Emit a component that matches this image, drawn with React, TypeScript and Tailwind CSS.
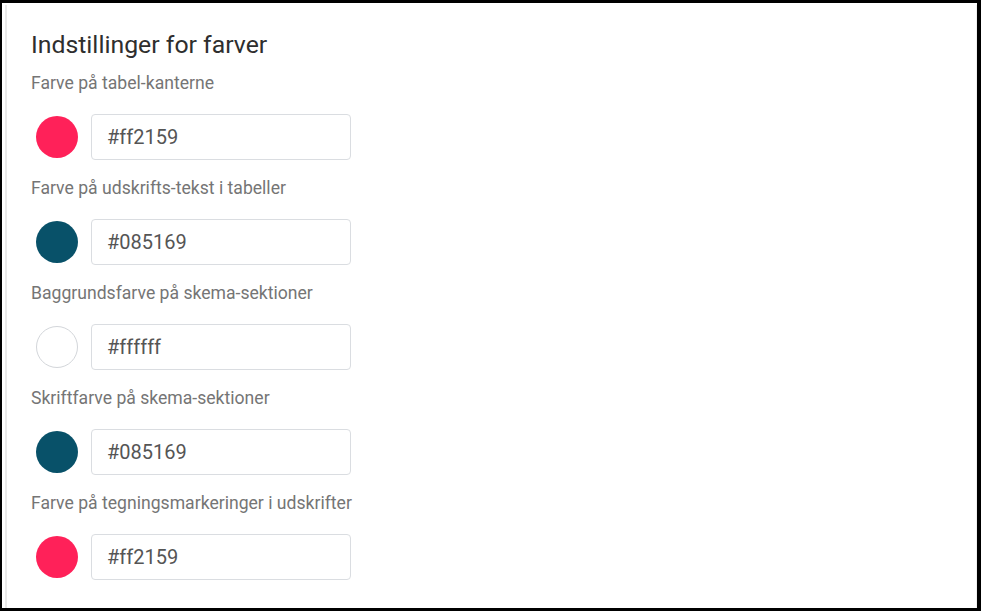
import React from "react";

const rows = [
  { label: "Farve på tabel-kanterne", color: "#ff2159" },
  { label: "Farve på udskrifts-tekst i tabeller", color: "#085169" },
  { label: "Baggrundsfarve på skema-sektioner", color: "#ffffff" },
  { label: "Skriftfarve på skema-sektioner", color: "#085169" },
  { label: "Farve på tegningsmarkeringer i udskrifter", color: "#ff2159" },
];

export default function App() {
  return (
    <div
      className="w-[981px] h-[611px] bg-white border-black border-t-[3px] border-l-2 border-r-4 border-b-[3px] pl-[3px] pt-[2px] overflow-hidden"
      style={{ fontFamily: "Roboto, 'Liberation Sans', sans-serif" }}
    >
      <div className="h-full border-l-2 border-r border-l-[#e9e9e9] border-r-[#f0f0f0] pl-[24px] pt-[24px]">
        <h2 className="text-[24.8px] leading-[32px] text-[#2e2e2e] font-normal">
          Indstillinger for farver
        </h2>
        <div className="mt-[10px] flex flex-col">
          {rows.map((r, i) => (
            <div key={i} className="flex flex-col pb-[16px]">
              <div className="text-[17.6px] leading-[24px] text-[#757575]">{r.label}</div>
              <div className="mt-[19px] flex items-center h-[46px]">
                <div className="w-[52px] flex justify-center">
                  <div
                    className={
                      "w-[42px] h-[42px] rounded-full" +
                      (r.color === "#ffffff" ? " border border-[#d3d6da]" : "")
                    }
                    style={{ backgroundColor: r.color }}
                  />
                </div>
                <div className="ml-[8px] w-[260px] h-[46px] border border-[#dadde1] rounded-[4px] flex items-center pl-[15px] text-[20px] text-[#555555]">
                  {r.color}
                </div>
              </div>
            </div>
          ))}
        </div>
      </div>
    </div>
  );
}
